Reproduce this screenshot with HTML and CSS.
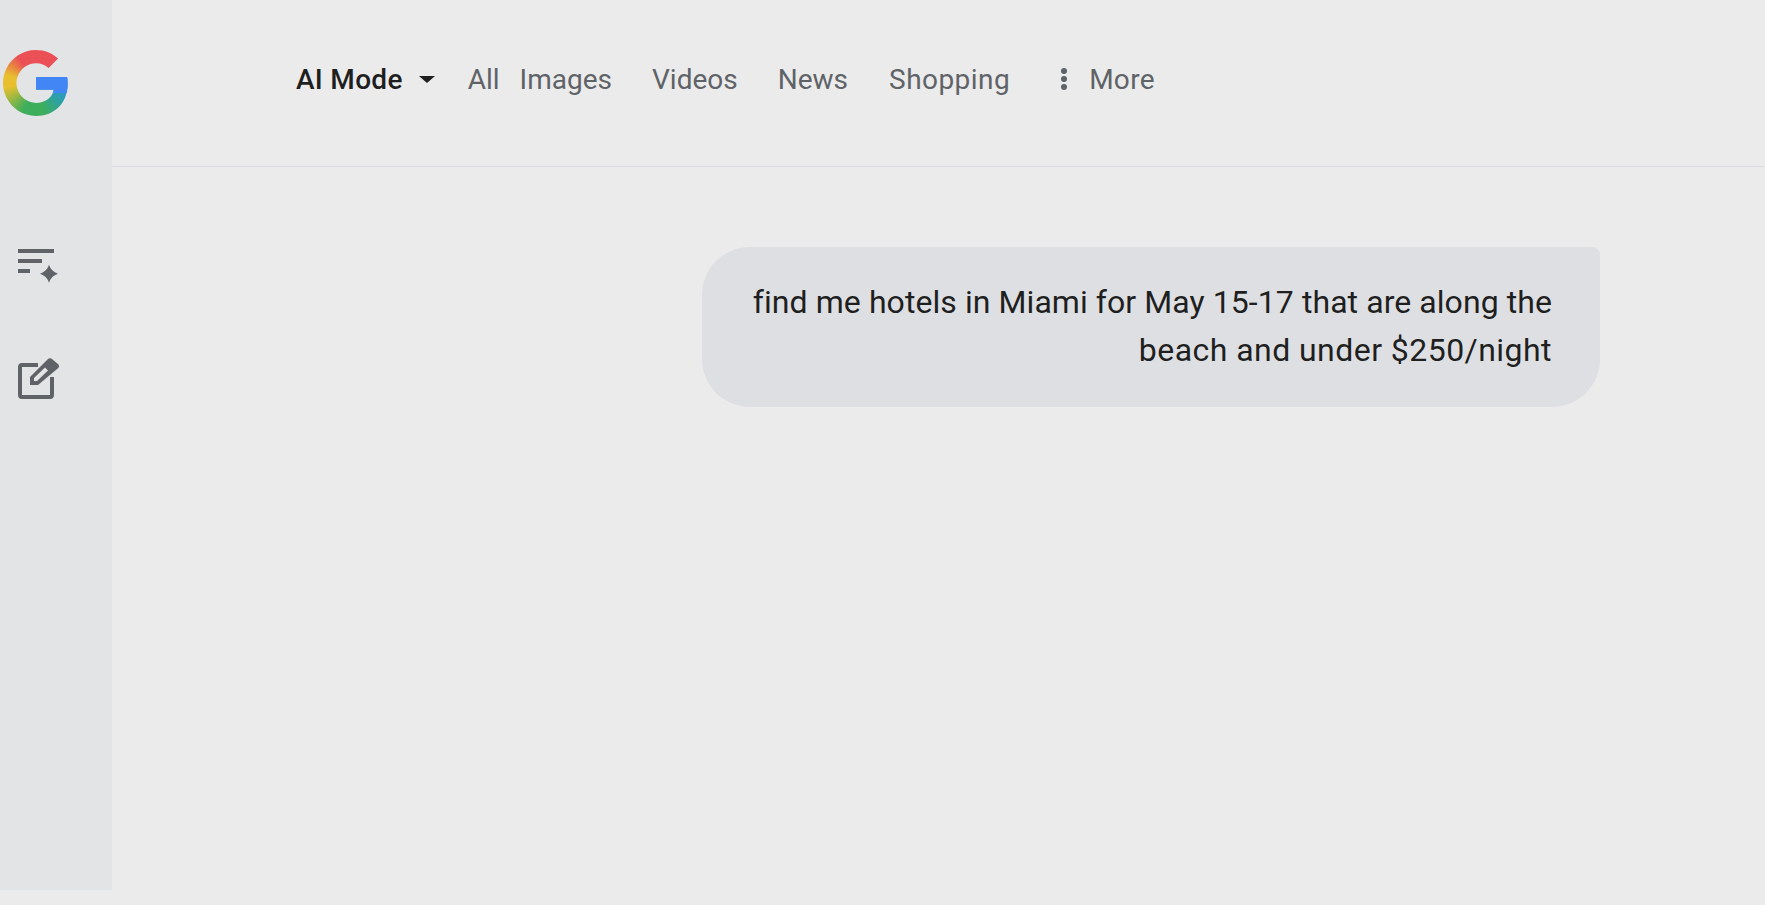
FILE: index.html
```html
<!DOCTYPE html>
<html lang="en">

<head>
    <meta charset="UTF-8">
    <meta name="viewport" content="width=device-width, initial-scale=1.0">
    <title>AI Mode</title>
    <link rel="stylesheet" href="styles.css">
</head>

<body>
    <svg class="defs" width="0" height="0" aria-hidden="true">
        <clipPath id="g-shape" clipPathUnits="userSpaceOnUse" transform="scale(3)">
            <path d="M22.56 12.25c0-.78-.07-1.53-.2-2.25H12v4.26h5.92c-.26 1.37-1.04 2.53-2.21 3.31v2.77h3.57c2.08-1.92 3.28-4.74 3.28-8.09z" />
            <path d="M12 23c2.97 0 5.46-.98 7.28-2.66l-3.57-2.77c-.98.66-2.23 1.06-3.71 1.06-2.86 0-5.29-1.93-6.16-4.53H2.18v2.84C3.99 20.53 7.7 23 12 23z" />
            <path d="M5.84 14.09c-.22-.66-.35-1.36-.35-2.09s.13-1.43.35-2.09V7.07H2.18C1.43 8.55 1 10.22 1 12s.43 3.45 1.18 4.93l2.85-2.22.81-.62z" />
            <path d="M12 5.38c1.62 0 3.06.56 4.21 1.64l3.15-3.15C17.45 2.09 14.97 1 12 1 7.7 1 3.99 3.47 2.18 7.07l3.66 2.84c.87-2.6 3.3-4.53 6.16-4.53z" />
        </clipPath>
    </svg>

    <div class="app">
        <aside class="sidebar">
            <div class="logo">
                <div class="logo-g"></div>
            </div>

            <button class="side-btn history-btn" aria-label="History">
                <svg width="40" height="36" viewBox="0 0 40 36">
                    <path d="M0 0h36v4H0zM0 10h24v4H0zM0 20h12v4H0z" />
                    <path d="M31 15.700Q33.200 22.500 40 24.700 33.200 26.900 31 33.700 28.800 26.900 22 24.700 28.800 22.500 31 15.700z" />
                </svg>
            </button>

            <button class="side-btn edit-btn" aria-label="New chat">
                <svg width="44" height="44" viewBox="0 0 44 44">
                    <path class="edit-box" d="M20 7H4a2 2 0 0 0-2 2v28a2 2 0 0 0 2 2h28a2 2 0 0 0 2-2V19" />
                    <path fill-rule="evenodd" d="M12 27V19L29.500 1.500a3.500 3.500 0 0 1 5 0l5.500 4.500a3 3 0 0 1 0 4.200L20 27zM16 23h3L30 12.500 27 9.500 16 20z" />
                </svg>
            </button>
        </aside>

        <div class="content">
            <header class="topbar">
                <nav class="tabs">
                    <a class="tab tab-active" href="#">AI Mode<span class="caret"></span></a>
                    <a class="tab tab-all" href="#">All</a>
                    <a class="tab" href="#">Images</a>
                    <a class="tab" href="#">Videos</a>
                    <a class="tab" href="#">News</a>
                    <a class="tab tab-shopping" href="#">Shopping</a>
                    <a class="tab tab-more" href="#">
                        <svg width="8" height="24" viewBox="0 0 8 24">
                            <circle cx="4" cy="4" r="3" />
                            <circle cx="4" cy="12" r="3" />
                            <circle cx="4" cy="20" r="3" />
                        </svg>
                        More
                    </a>
                </nav>
            </header>

            <main class="chat">
                <p class="bubble">find me hotels in Miami for May 15-17 that are along the <span class="bubble-end">beach and under $250/night</span></p>
            </main>
        </div>
    </div>
</body>

</html>
```

FILE: styles.css
```css
html {
    font-family: Roboto, Arial, sans-serif;
    background: #ebebeb;
}

body {
    margin: 0;
    height: 905px;
    overflow: hidden;
}

.defs {
    display: block;
    height: 0;
}

.app {
    display: flex;
    height: 890px;
}

/* left rail */

.sidebar {
    width: 112px;
    flex-shrink: 0;
    background: #e3e4e6;
    display: flex;
    flex-direction: column;
    align-items: flex-start;
}

.logo {
    margin-top: 47px;
    filter: blur(.6px);
}

.logo-g {
    width: 72px;
    height: 72px;
    clip-path: url(#g-shape);
    background:
        linear-gradient(#4285f4, #4285f4) 36px 30px / 36px 16px no-repeat,
        conic-gradient(#ea5055 0deg, #ea5055 40deg, #4285f4 75deg, #2a9fb0 122deg, #3dae5c 165deg, #3dae5c 205deg, #e8bf2f 262deg, #e8bf2f 285deg, #ea5055 325deg, #ea5055 360deg);
}

.side-btn {
    background: none;
    border: 0;
    padding: 0;
    margin: 0 0 0 18px;
    display: block;
    line-height: 0;
    fill: #5f6368;
}

.side-btn svg {
    overflow: visible;
}

.history-btn {
    margin-top: 130px;
}

.edit-btn {
    margin-top: 73px;
}

.edit-box {
    fill: none;
    stroke: #5f6368;
    stroke-width: 4;
}

/* top nav */

.content {
    flex: 1;
    display: flex;
    flex-direction: column;
}

.topbar {
    height: 166px;
    border-bottom: 1px solid #dadce0;
    display: flex;
    align-items: flex-start;
    padding-left: 184px;
}

.tabs {
    display: flex;
    align-items: center;
    margin-top: 59px;
    height: 40px;
    gap: 40px;
}

.tab {
    color: #5f6368;
    font-size: 28px;
    text-decoration: none;
    white-space: nowrap;
}

.tab-active {
    color: #1f1f1f;
    font-weight: 500;
    letter-spacing: .3px;
    display: flex;
    align-items: center;
    margin-right: -7px;
}

.tab-all {
    margin-right: -20px;
}

.tab-shopping {
    margin-left: 1px;
    letter-spacing: .45px;
}

.tab-more {
    display: flex;
    align-items: center;
    gap: 21px;
    margin-left: 10px;
    fill: #5f6368;
    letter-spacing: .3px;
}

.caret {
    width: 0;
    height: 0;
    margin-left: 16px;
    border-left: 8px solid transparent;
    border-right: 8px solid transparent;
    border-top: 7px solid #1f1f1f;
}

/* chat */

.chat {
    display: flex;
    justify-content: flex-end;
    padding: 80px 165px 0 0;
}

.bubble {
    width: 802px;
    margin: 0;
    padding: 31px 48px 33px;
    background: #dedfe2;
    border-radius: 48px 8px 48px 48px;
    color: #1f1f1f;
    font-size: 32px;
    line-height: 48px;
    letter-spacing: .07px;
    text-align: right;
}

.bubble-end {
    letter-spacing: .45px;
}
```
